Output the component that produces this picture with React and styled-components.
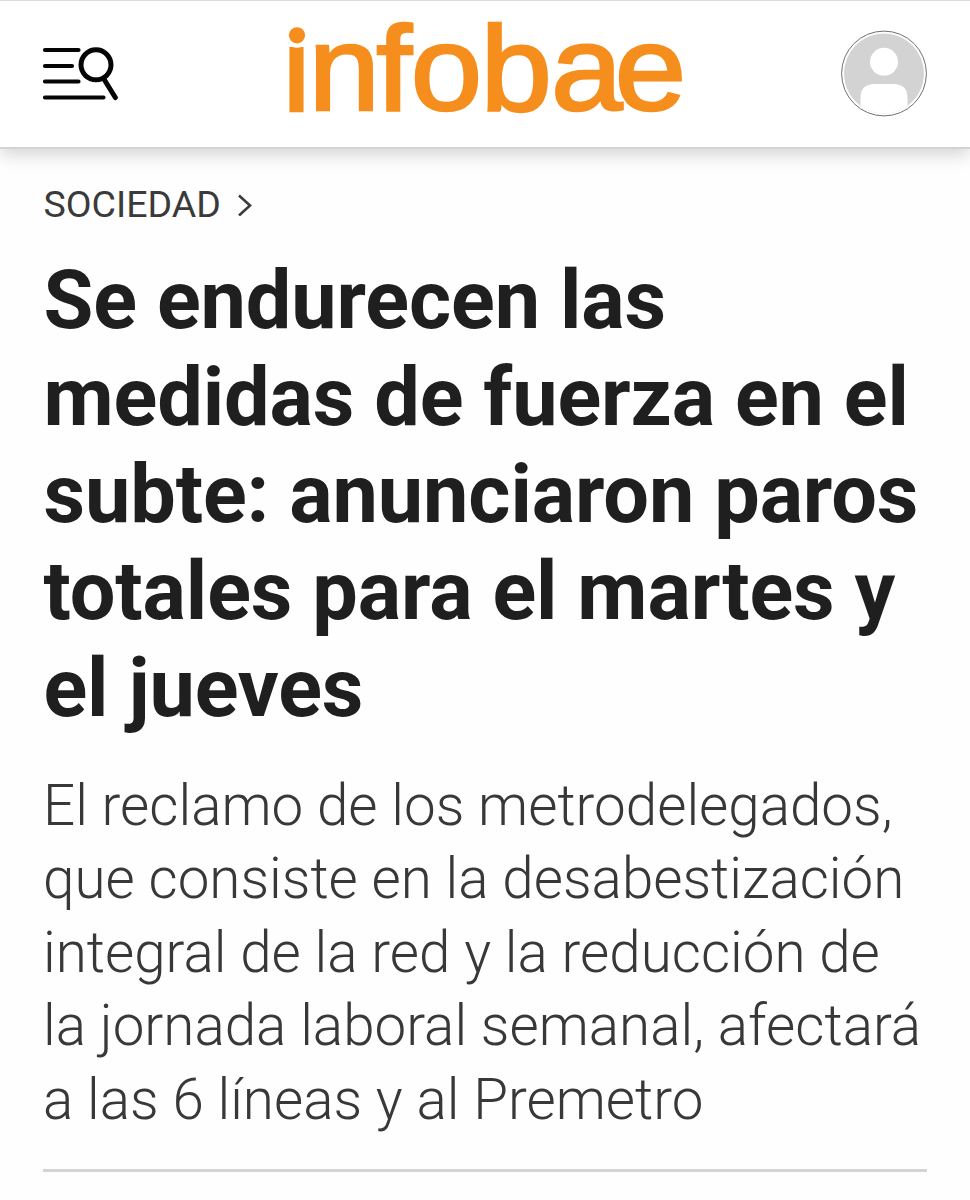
import React from 'react';
import styled, { createGlobalStyle } from 'styled-components';

const GlobalStyle = createGlobalStyle`
  * {
    box-sizing: border-box;
  }

  body {
    margin: 0;
    background: #fefefe;
    font-family: Roboto, 'Liberation Sans', sans-serif;
  }
`;

const Page = styled.div`
  width: 970px;
  height: 1200px;
  overflow: hidden;
  background: #fefefe;
`;

const Header = styled.header`
  display: flex;
  align-items: flex-start;
  justify-content: space-between;
  height: 149px;
  padding: 0 43px 0 42px;
  background: #fff;
  border-top: 1px solid #dcdcdc;
  border-bottom: 2px solid #d3d3d3;
  box-shadow: 0 6px 16px rgba(0, 0, 0, 0.16);
`;

const IconButton = styled.button`
  display: block;
  margin-top: ${(props) => props.$top}px;
  padding: 0;
  border: 0;
  background: none;

  svg {
    display: block;
  }
`;

const Logo = styled.svg`
  display: block;
  margin-top: 1px;
  margin-left: 13px;

  text {
    font-family: 'Liberation Sans', Arial, sans-serif;
    font-size: 120px;
    fill: #f68e1e;
    stroke: #f68e1e;
    stroke-width: 2.6px;
  }
`;

const Article = styled.main`
  padding: 32px 43px 0;
`;

const Section = styled.a`
  display: flex;
  align-items: center;
  gap: 16px;
  height: 46px;
  padding-left: 0.5px;
  font-size: 37.5px;
  line-height: 46px;
  color: #3a3a3a;
`;

const Title = styled.h1`
  margin: 25px 0 0;
  padding-left: 0.5px;
  font-size: 81px;
  font-weight: 700;
  line-height: 97px;
  letter-spacing: -0.12px;
  color: #1f1f1f;
  white-space: nowrap;
`;

const Summary = styled.h2`
  margin: 33px 0 0;
  padding-bottom: 32px;
  border-bottom: 3px solid #d3d3d3;
  font-size: 56.5px;
  font-weight: 300;
  line-height: 73.4px;
  color: #383838;
  white-space: nowrap;
`;

const MenuSearchIcon = () => (
  <svg width="76" height="56" viewBox="0 0 76 56" fill="none" stroke="#050505" strokeWidth="4.2" strokeLinecap="round">
    <path d="M3 4H36.5M3 20H30M3 35.5H36.5M3 51.5H61.5" />
    <circle cx="54" cy="18.8" r="15" strokeWidth="5" />
    <path d="M62.5 34L73.3 51.5" strokeWidth="5" />
  </svg>
);

const AvatarIcon = () => (
  <svg width="86" height="87" viewBox="0 0 86 87">
    <defs>
      <clipPath id="avatar">
        <circle cx="43" cy="43.5" r="40" />
      </clipPath>
    </defs>
    <circle cx="43" cy="43.5" r="42.4" fill="#fff" stroke="#707070" strokeWidth="1" />
    <g clipPath="url(#avatar)">
      <rect width="86" height="87" fill="#d3d3d3" />
      <circle cx="43" cy="31.8" r="14" fill="#fff" />
      <path d="M19.5 87V68Q19.5 54 33.5 54H52.5Q66.5 54 66.5 68V87Z" fill="#fff" />
    </g>
  </svg>
);

const InfobaeLogo = () => (
  <Logo width="412" height="138" viewBox="0 -18 412 138">
    <g transform="scale(1.07 1)">
      <text x="2.2 26.6 90 122.1 187.3 253.3 312.8" y="90.2">infobae</text>
    </g>
    {/* round dot in place of the square one */}
    <rect x="6" y="0" width="20" height="27" fill="#fff" />
    <circle cx="17" cy="15.3" r="12.4" fill="#fff" />
    <circle cx="17" cy="15.3" r="8.1" fill="#f68e1e" />
  </Logo>
);

const App = () => {
  return (
    <Page>
      <GlobalStyle />
      <Header>
        <IconButton $top={45} aria-label="Menú">
          <MenuSearchIcon />
        </IconButton>
        <InfobaeLogo />
        <IconButton $top={29} aria-label="Cuenta">
          <AvatarIcon />
        </IconButton>
      </Header>
      <Article>
        <Section>
          SOCIEDAD
          <svg width="16" height="24" viewBox="0 0 16 24" fill="none" stroke="#3a3a3a" strokeWidth="2.6">
            <path d="M2 3.5L13 13.5L2 23.5" />
          </svg>
        </Section>
        <Title>
          Se endurecen las<br />
          medidas de fuerza en el<br />
          subte: anunciaron paros<br />
          totales para el martes y<br />
          el jueves
        </Title>
        <Summary>
          El reclamo de los metrodelegados,<br />
          que consiste en la desabestización<br />
          integral de la red y la reducción de<br />
          la jornada laboral semanal, afectará<br />
          a las 6 líneas y al Premetro
        </Summary>
      </Article>
    </Page>
  );
};

export default App;
